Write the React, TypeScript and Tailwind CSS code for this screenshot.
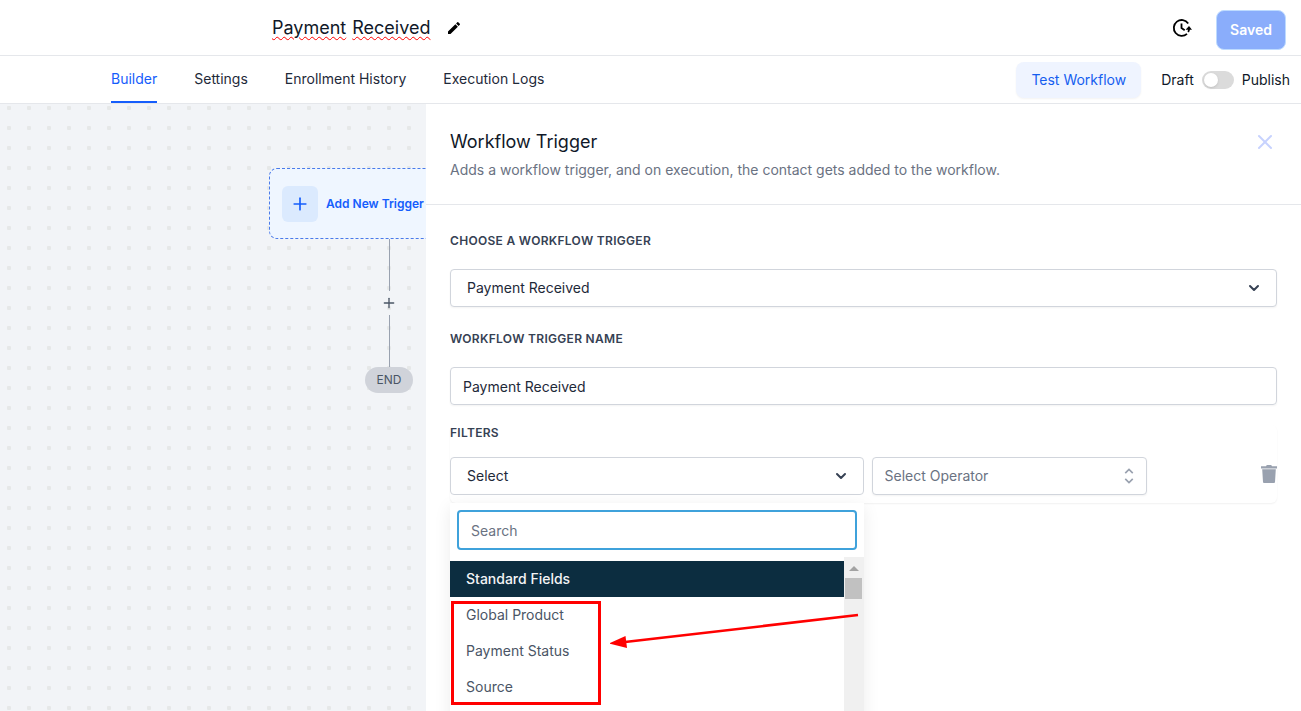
import { ReactNode, useState } from "react";
import { ChevronDown, Plus, X } from "lucide-react";

const tabs = ["Builder", "Settings", "Enrollment History", "Execution Logs"];

const standardFields = ["Global Product", "Payment Status", "Source"];

function PencilIcon() {
  return (
    <svg viewBox="0 0 24 24" className="size-4" fill="currentColor" aria-hidden="true">
      <path d="M3 17.25V21h3.75L17.81 9.94l-3.75-3.75L3 17.25zM20.71 7.04a1 1 0 0 0 0-1.41l-2.34-2.34a1 1 0 0 0-1.41 0l-1.83 1.83 3.75 3.75 1.83-1.83z" />
    </svg>
  );
}

function HistoryIcon() {
  return (
    <svg viewBox="0 0 20 20" className="size-5" fill="none" stroke="currentColor" strokeWidth="1.8" aria-hidden="true">
      <path d="M15 15.800A7.900 7.900 0 1 1 16.200 5.400" />
      <path d="M9.500 5.400V10l3.200 2.200" />
      <path d="M13.600 11.800 17 8l3 3.800z" fill="currentColor" stroke="none" />
      <path d="M17 11c0 1.200-.2 2-.8 3" />
    </svg>
  );
}

function SelectorIcon() {
  return (
    <svg
      viewBox="0 0 24 24"
      className="pointer-events-none absolute top-[9px] right-2 size-5 text-gray-400"
      fill="none"
      stroke="currentColor"
      strokeWidth="2"
      aria-hidden="true"
    >
      <path d="M7.500 8.500 12 4l4.500 4.500M7.500 15.500 12 20l4.500-4.500" />
    </svg>
  );
}

function TrashIcon() {
  return (
    <svg viewBox="0 0 16 18" className="h-[18px] w-4" fill="currentColor" aria-hidden="true">
      <path d="M0 1.200h5L5.800 0h4.400l.8 1.200h5v2.300H0z" />
      <path d="M1.200 4.200h13.600l-.8 12.800a1 1 0 0 1-1 1H3a1 1 0 0 1-1-1z" />
    </svg>
  );
}

interface LabelProps {
  htmlFor: string;
  children: ReactNode;
}

function FieldLabel({ htmlFor, children }: LabelProps) {
  return (
    <label htmlFor={htmlFor} className="block text-xs font-semibold uppercase tracking-wide text-gray-700">
      {children}
    </label>
  );
}

function TopBar() {
  return (
    <header className="flex h-14 items-center border-b border-gray-200 pr-[15px] pl-[272px]">
      <h1 className="flex gap-1.5 text-lg text-gray-900">
        <span className="underline decoration-[#ff0000] decoration-wavy decoration-1 underline-offset-2">Payment</span>
        <span className="underline decoration-[#ff0000] decoration-wavy decoration-1 underline-offset-2">Received</span>
      </h1>
      <button type="button" aria-label="Rename workflow" className="ml-4 text-black">
        <PencilIcon />
      </button>
      <div className="ml-auto flex items-center gap-6 pt-1">
        <button type="button" aria-label="Version history" className="pb-1 text-black">
          <HistoryIcon />
        </button>
        <button
          type="button"
          className="h-10 w-[70px] rounded-lg border border-blue-200 bg-[#8aadfb] text-sm font-semibold text-white"
        >
          Saved
        </button>
      </div>
    </header>
  );
}

function TabBar() {
  const [published, setPublished] = useState(false);

  return (
    <div className="flex h-12 items-center justify-between border-b border-gray-200 pr-[11px] pl-[111px]">
      <nav className="flex h-full gap-[37px] text-sm">
        {tabs.map((tab, i) => (
          <a
            key={tab}
            href="#"
            className={`flex items-center border-b-2 ${i === 0 ? "border-blue-600 text-blue-600" : "border-transparent text-gray-800"}`}
          >
            {tab}
          </a>
        ))}
      </nav>
      <div className="flex items-center gap-5 text-sm">
        <button type="button" className="h-9 rounded-lg bg-[#eff4ff] px-[15px] text-[#155eef] shadow-xs">
          Test Workflow
        </button>
        <div className="flex items-center gap-2 text-gray-900">
          <span>Draft</span>
          <input
            id="publish"
            type="checkbox"
            role="switch"
            checked={published}
            onChange={(e) => setPublished(e.target.checked)}
            className="h-[18px] w-8 appearance-none rounded-full bg-[#dbdbdb] p-0.5 before:block before:size-[14px] before:rounded-full before:bg-white before:shadow-sm checked:bg-blue-600 checked:before:ml-[14px]"
          />
          <label htmlFor="publish">Publish</label>
        </div>
      </div>
    </div>
  );
}

function Canvas() {
  return (
    <section className="w-[426px] shrink-0 overflow-hidden bg-[#f2f4f7] bg-[radial-gradient(circle,#e6e8e8_2px,transparent_2.500px)] bg-[size:20px_20px] bg-[position:-1px_-6px] pt-16 pl-[269px]">
      <div className="flex w-60 flex-col items-center">
        <button
          type="button"
          className="flex h-[71px] w-full items-center gap-2 rounded-lg border border-dashed border-[#4a7bea] bg-[#eff6ff] px-3 text-xs font-semibold text-blue-600"
        >
          <span className="flex size-9 items-center justify-center rounded-md bg-blue-100">
            <Plus className="size-5" strokeWidth={2} />
          </span>
          Add New Trigger
        </button>
        <span className="h-13 w-px bg-gray-400" />
        <button type="button" aria-label="Add step" className="flex h-6 items-center text-gray-600">
          <Plus className="size-4" strokeWidth={2} />
        </button>
        <span className="h-13 w-px bg-gray-400" />
        <span className="rounded-full bg-[#d0d3da] px-3 py-1 text-xs leading-[18px] text-gray-600">END</span>
      </div>
    </section>
  );
}

function FieldMenu() {
  return (
    <div className="absolute top-full left-0 h-[360px] w-1/2 bg-white shadow-[0_4px_16px_rgba(0,0,0,0.08)]">
      <div className="p-[7px]">
        <input
          type="search"
          aria-label="Search fields"
          placeholder="Search"
          className="h-10 w-full rounded border-2 border-[#3fa2db] px-3 text-sm outline-none placeholder:text-gray-500"
        />
      </div>
      <div className="flex h-[306px]">
        <ul role="listbox" aria-label="Filter fields" className="grow pt-1 text-sm">
          <li role="presentation" className="flex h-9 items-center bg-[#0c2d40] px-4 font-medium text-gray-100">
            Standard Fields
          </li>
          {standardFields.map((field) => (
            <li key={field} role="option" aria-selected="false" className="flex h-9 items-center px-4 text-gray-600">
              {field}
            </li>
          ))}
        </ul>
        <div className="flex w-5 flex-col items-center bg-[#f0f0f0] pt-[9px]">
          <span className="border-x-5 border-b-5 border-x-transparent border-b-[#a3a3a3]" />
          <span className="mt-[7px] h-[21px] w-[17px] bg-[#c1c1c1]" />
        </div>
      </div>
      {/* callout around the payment fields */}
      <div className="absolute top-[98px] left-px h-[104px] w-[150px] border-3 border-[#ff0000]" />
      <svg className="absolute top-[108px] left-40 h-10 w-[250px]" viewBox="0 0 250 40" aria-hidden="true">
        <path d="M248 4 L15 31" stroke="#ff0000" strokeWidth="2.500" />
        <path d="M-1 32.500 15.500 25 17 37z" fill="#ff0000" />
      </svg>
    </div>
  );
}

function TriggerPanel() {
  return (
    <section className="min-w-0 grow bg-white">
      <div className="flex items-start justify-between border-b border-gray-200 p-6">
        <div>
          <h2 className="text-lg text-gray-900">Workflow Trigger</h2>
          <p className="mt-1 text-sm text-gray-500">
            Adds a workflow trigger, and on execution, the contact gets added to the workflow.
          </p>
        </div>
        <button type="button" aria-label="Close" className="pt-0.5 text-[#c7d2fe]">
          <X className="size-6" strokeWidth={2} />
        </button>
      </div>

      <form className="px-6 pt-7">
        <FieldLabel htmlFor="trigger">Choose a workflow trigger</FieldLabel>
        <div className="relative mt-5">
          <select
            id="trigger"
            className="h-[38px] w-full appearance-none rounded border border-gray-300 bg-white px-4 text-sm text-gray-800 shadow-xs"
          >
            <option>Payment Received</option>
          </select>
          <ChevronDown
            className="pointer-events-none absolute top-[11px] right-[15px] size-4 text-gray-700"
            strokeWidth={3}
          />
        </div>

        <div className="mt-6">
          <FieldLabel htmlFor="name">Workflow trigger name</FieldLabel>
          <input
            id="name"
            type="text"
            defaultValue="Payment Received"
            className="mt-5 h-[38px] w-full rounded border border-gray-300 px-3 text-sm text-gray-800 shadow-xs"
          />
        </div>

        <div className="relative mt-5 rounded-md pb-2 shadow-[0_1px_2px_rgba(0,0,0,0.06)]">
          <FieldLabel htmlFor="filter">Filters</FieldLabel>
          <div className="mt-4 flex items-center gap-2">
            <button
              id="filter"
              type="button"
              aria-haspopup="listbox"
              aria-expanded="true"
              className="flex h-[38px] w-1/2 items-center justify-between rounded border border-gray-300 pr-[14px] pl-4 text-sm text-gray-800"
            >
              Select
              <ChevronDown className="size-4 text-gray-700" strokeWidth={3} />
            </button>
            <div className="relative w-1/3">
              <select
                aria-label="Operator"
                className="h-[38px] w-full appearance-none rounded border border-gray-300 bg-white px-3 text-sm text-gray-500 shadow-xs"
              >
                <option>Select Operator</option>
              </select>
              <SelectorIcon />
            </div>
            <button type="button" aria-label="Delete filter" className="ml-auto pb-1 text-gray-400">
              <TrashIcon />
            </button>
          </div>
          <FieldMenu />
        </div>
      </form>
    </section>
  );
}

export default function App() {
  return (
    <div className="flex h-screen flex-col overflow-hidden bg-white font-['Inter',sans-serif]">
      <TopBar />
      <TabBar />
      <main className="flex min-h-0 grow overflow-hidden">
        <Canvas />
        <TriggerPanel />
      </main>
    </div>
  );
}
